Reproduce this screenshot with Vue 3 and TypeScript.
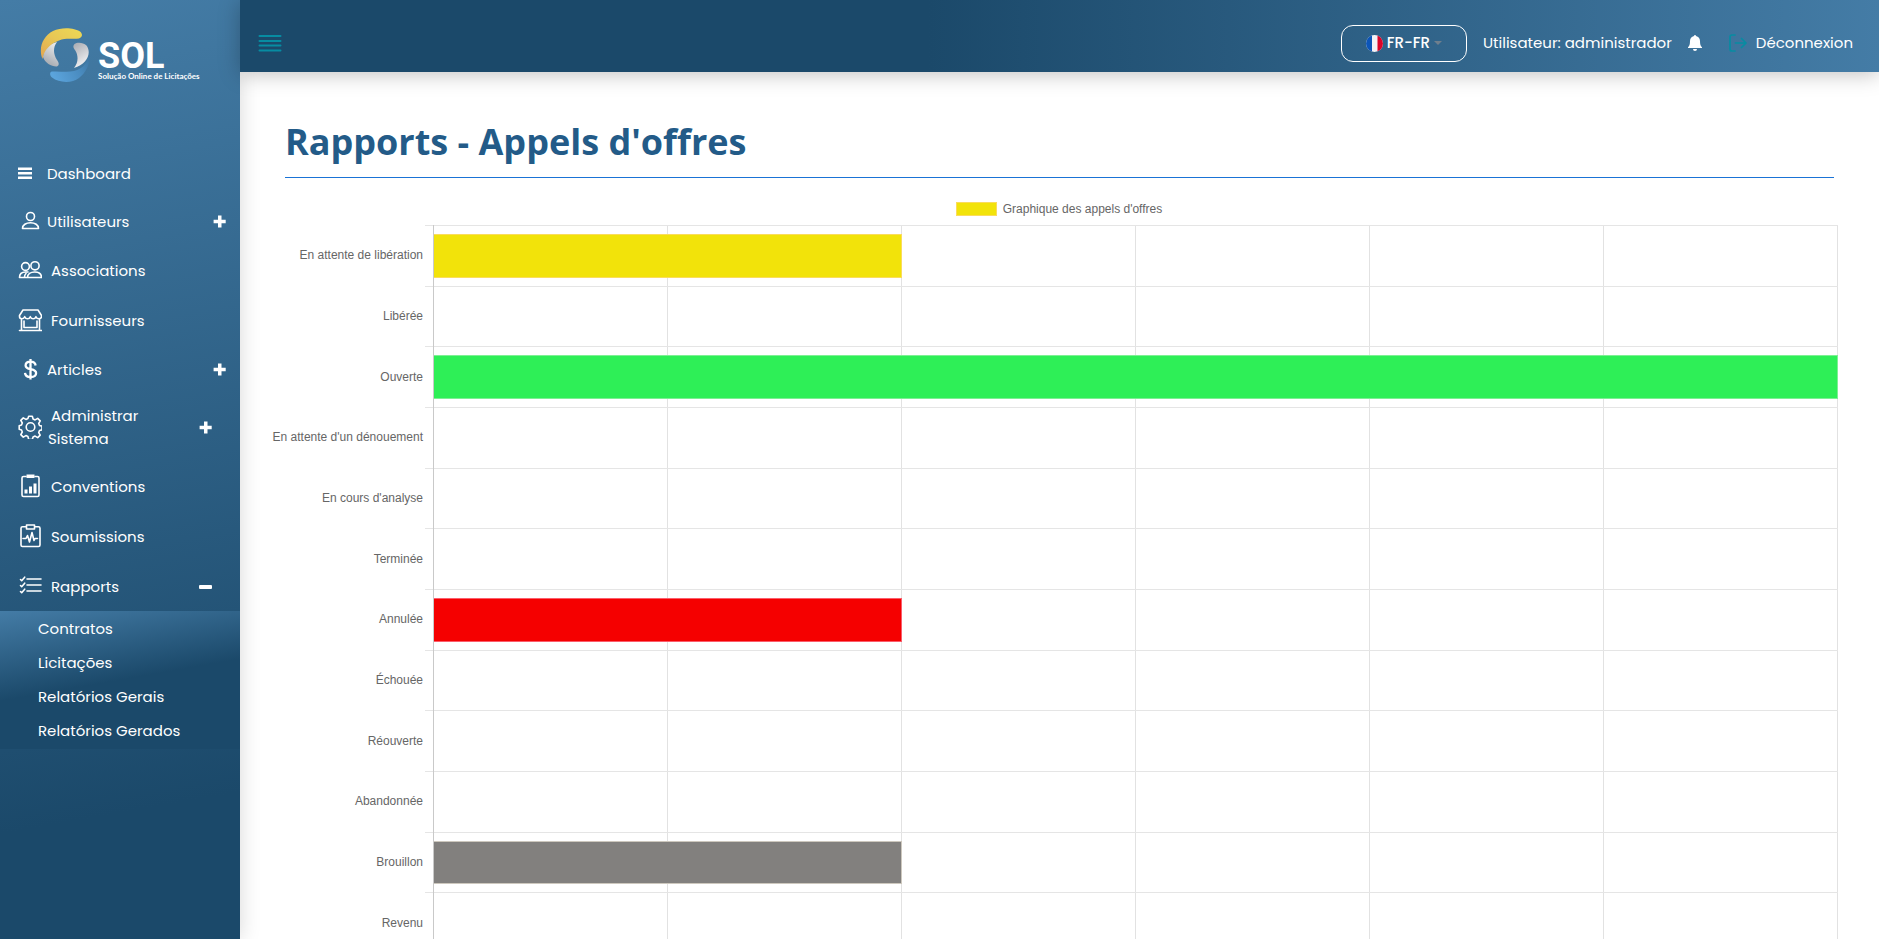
<script setup lang="ts">
interface MenuItem {
  label: string
  icon: string
  size?: 'tight' | 'wide'
  toggle?: 'plus' | 'minus'
  inset?: boolean
}

interface ChartRow {
  label: string
  value: number
  tone: string
}

const menu: MenuItem[] = [
  { label: 'Dashboard', icon: 'bars', size: 'tight' },
  { label: 'Utilisateurs', icon: 'user', size: 'tight', toggle: 'plus' },
  { label: 'Associations', icon: 'users', size: 'wide' },
  { label: 'Fournisseurs', icon: 'shop', size: 'wide' },
  { label: 'Articles', icon: 'dollar', size: 'tight', toggle: 'plus' },
  { label: 'Administrar Sistema', icon: 'gear', toggle: 'plus', inset: true },
  { label: 'Conventions', icon: 'report', size: 'wide' },
  { label: 'Soumissions', icon: 'pulse', size: 'wide' },
  { label: 'Rapports', icon: 'checks', size: 'wide', toggle: 'minus', inset: true },
]

const reports: string[] = ['Contratos', 'Licitações', 'Relatórios Gerais', 'Relatórios Gerados']

const maxValue = 6
const rows: ChartRow[] = [
  { label: 'En attente de libération', value: 2, tone: 'yellow' },
  { label: 'Libérée', value: 0, tone: '' },
  { label: 'Ouverte', value: 6, tone: 'green' },
  { label: "En attente d'un dénouement", value: 0, tone: '' },
  { label: "En cours d'analyse", value: 0, tone: '' },
  { label: 'Terminée', value: 0, tone: '' },
  { label: 'Annulée', value: 2, tone: 'red' },
  { label: 'Échouée', value: 0, tone: '' },
  { label: 'Réouverte', value: 0, tone: '' },
  { label: 'Abandonnée', value: 0, tone: '' },
  { label: 'Brouillon', value: 2, tone: 'gray' },
  { label: 'Revenu', value: 0, tone: '' },
]
</script>

<template>
  <div class="app">
    <aside class="sidebar">
      <a class="brand" href="#">
        <svg class="brand-mark" viewBox="0 0 50 54" aria-hidden="true">
          <defs>
            <linearGradient id="gold" x1="0" y1="1" x2="1" y2="0">
              <stop offset="0" stop-color="#e2a551" />
              <stop offset="0.5" stop-color="#e8c755" />
              <stop offset="1" stop-color="#ecd955" />
            </linearGradient>
            <linearGradient id="silverLeft" x1="1" y1="0" x2="0.6" y2="1">
              <stop offset="0" stop-color="#f4f4f5" />
              <stop offset="1" stop-color="#a9adb3" />
            </linearGradient>
            <linearGradient id="silverRight" x1="0" y1="0" x2="0.4" y2="1">
              <stop offset="0" stop-color="#a6a9b0" />
              <stop offset="1" stop-color="#f1f1f3" />
            </linearGradient>
            <linearGradient id="azure" x1="0" y1="0.6" x2="1" y2="0.2">
              <stop offset="0" stop-color="#5ba4dc" />
              <stop offset="0.6" stop-color="#4a8cc0" />
              <stop offset="1" stop-color="#3d74a0" />
            </linearGradient>
          </defs>
          <path fill="url(#azure)" d="M50 22C49 34 43 41 34 43C27 44.500 20 43 12 43.500C9.500 44 9.500 47.500 12 49.500C19 55 32 55.500 39 50C47 44 51 34 50 22Z" />
          <path fill="url(#silverLeft)" d="M17 14C10 15 3 22 3 29C5 35 12 39 17 38.500C20 37 18.500 34 17 32C13 26 13 19 17 14Z" />
          <path fill="url(#gold)" d="M2.500 31C-2 20 3 8 13 3C22-1.500 35 0 40 3.500C43 6 42.500 9.500 39 10.500C33 11.500 26 9.500 19 12.500C10 16 4 22 2.500 31Z" />
          <path fill="url(#silverRight)" d="M34 40C47 36 52 25 46.500 17.500C43 14 37 14 34.500 16C32.500 18 33.500 20 35 22C39 28 38 35 34 40Z" />
        </svg>
        <span class="brand-words">
          <span class="brand-name">SOL</span>
          <span class="brand-tagline">Solução Online de Licitações</span>
        </span>
      </a>

      <nav class="menu" aria-label="Menu">
        <a
          v-for="item in menu"
          :key="item.label"
          class="menu-item"
          :class="[item.size, { inset: item.inset }]"
          href="#"
        >
          <svg v-if="item.icon === 'bars'" class="icon" viewBox="0 0 24 24" aria-hidden="true">
            <path fill="#fff" d="M0 6.500h14v2.500H0zM0 11h14v2.500H0zM0 15.500h14v2.500H0z" />
          </svg>
          <svg v-else-if="item.icon === 'user'" class="icon line" viewBox="0 0 24 24" aria-hidden="true">
            <circle cx="12.500" cy="7.500" r="4" />
            <path d="M4.500 19.500h16c0-3.600-3.600-5.800-8-5.800s-8 2.200-8 5.800z" />
          </svg>
          <svg v-else-if="item.icon === 'users'" class="icon line" viewBox="0 0 24 24" aria-hidden="true">
            <circle cx="7.500" cy="8.500" r="3.900" />
            <circle cx="17" cy="7.800" r="4.100" />
            <path d="M9.500 19.500h14c0-3.600-2.800-5.500-6.800-5.500s-7.200 2-7.200 5.500zM9.500 19.500H1.500c0-3.600 2.600-5.500 6-5.500h2.500M8 15.500c-1 1-1.500 2-1.500 3.500" />
          </svg>
          <svg v-else-if="item.icon === 'shop'" class="icon line" viewBox="0 0 24 24" aria-hidden="true">
            <path d="M5 2h15l3.500 5.500v1c0 3-4.500 3-5.600.2-1 2.800-4.400 2.800-5.600 0-1 2.800-4.400 2.800-5.600 0C5.500 11.500 1.500 11.500 1.500 8.500v-1zM3.500 11v11M21.500 11v11M1.500 22.500h22M6 13v6.500h13V13" />
          </svg>
          <svg v-else-if="item.icon === 'dollar'" class="icon" viewBox="0 0 24 24" aria-hidden="true">
            <path fill="none" stroke="#fff" stroke-width="2.300" d="M12.500 2v20.500M17.600 8.500c-.3-2.500-2-3.800-5-3.800-3.200 0-5 1.500-5 3.700 0 5.400 10.500 2.200 10.500 7.700 0 2.400-2 4-5.400 4s-5.500-1.500-5.700-4.200" />
          </svg>
          <svg v-else-if="item.icon === 'gear'" class="icon line" viewBox="0 0 24 24" aria-hidden="true">
            <circle cx="12.500" cy="12" r="4.300" />
            <path d="M10.700 1.200h3.600l.8 2.800 2 .9 2.600-1.500 2.500 2.500-1.500 2.600.8 2 2.500.7v3.600l-2.500.7-.8 2 1.500 2.600-2.500 2.500-2.600-1.500-2 .9-.8 2.500h-3.600L9.900 21.500l-2-.9-2.600 1.500-2.500-2.500 1.500-2.600-.8-2-2.300-.7v-3.600l2.300-.7.8-2-1.500-2.600 2.500-2.500 2.600 1.500 2-.9z" />
          </svg>
          <svg v-else-if="item.icon === 'report'" class="icon line" viewBox="0 0 24 24" aria-hidden="true">
            <path d="M8 2.500H5.500q-1.500 0-1.500 1.500v17q0 1.500 1.500 1.500h14q1.500 0 1.500-1.500V4q0-1.500-1.500-1.500H17" />
            <path class="solid" d="M8.500.500h8V4h-8zM6.500 15.500h3v4h-3zM11 12.500h3v7h-3zM15.500 9.500h3v10h-3z" />
          </svg>
          <svg v-else-if="item.icon === 'pulse'" class="icon line" viewBox="0 0 24 24" aria-hidden="true">
            <path d="M8 2.800H4.500Q3 2.800 3 4.300V21q0 1.500 1.500 1.500h16q1.500 0 1.500-1.500V4.300q0-1.500-1.500-1.500H17M8.500 1h8v4h-8zM5 14.500h3l1.500-3 2 6.500 2.500-9.500 2 8 1-2h2.500" />
          </svg>
          <svg v-else class="icon line" viewBox="0 0 24 24" aria-hidden="true">
            <path d="M9 5h14M9 11h14M9 17h14M2.500 5.500l1.200 1.200 3-3.500M2.500 11.500l1.200 1.200 3-3.500M2.500 17.500l1.200 1.200 3-3.500" />
          </svg>
          <span class="menu-label">{{ item.label }}</span>
          <svg v-if="item.toggle" class="toggle" viewBox="0 0 13 13" aria-hidden="true">
            <path v-if="item.toggle === 'plus'" fill="#fff" d="M5 .500h3.500v4.300h4.200v3.500H8.500v4.200H5V8.300H.600V4.800H5z" />
            <rect v-else fill="#fff" x="0" y="5" width="13" height="4" rx="1" />
          </svg>
        </a>
      </nav>

      <nav class="submenu" aria-label="Rapports">
        <a v-for="report in reports" :key="report" href="#">{{ report }}</a>
      </nav>
    </aside>

    <div class="page">
      <header class="topbar">
        <button class="burger" type="button" aria-label="Menu">
          <svg viewBox="0 0 24 18" aria-hidden="true">
            <path stroke="#078ca2" stroke-width="2" stroke-linecap="round" d="M1.500 2h21M1.500 7h21M1.500 11.500h21M1.500 16.500h21" />
          </svg>
        </button>
        <div class="session">
          <button class="language" type="button" aria-haspopup="listbox">
            <svg class="flag" viewBox="0 0 17 17" aria-hidden="true">
              <clipPath id="disc"><circle cx="8.500" cy="8.500" r="8.500" /></clipPath>
              <g clip-path="url(#disc)">
                <rect width="17" height="17" fill="#f3f1f5" />
                <rect width="6" height="17" fill="#0c55b8" />
                <rect x="11.500" width="6" height="17" fill="#da0428" />
              </g>
            </svg>
            <span class="text">FR-FR</span>
            <svg class="caret" viewBox="0 0 8 4" aria-hidden="true"><path fill="#6f7f8d" d="M0 0h8L4 4z" /></svg>
          </button>
          <span class="user text">Utilisateur: administrador</span>
          <button class="bell" type="button" aria-label="Notifications">
            <svg viewBox="0 0 14 16" aria-hidden="true">
              <path fill="#fff" d="M7 0a1 1 0 0 1 1 1c2.500.5 4 2.500 4 5 0 3.500.6 5 2 6.200V13H0v-.8C1.400 11 2 9.500 2 6c0-2.500 1.500-4.500 4-5a1 1 0 0 1 1-1zM5 14h4a2 2 0 0 1-4 0z" />
            </svg>
          </button>
          <a class="logout" href="#">
            <svg viewBox="0 0 18 18" aria-hidden="true">
              <path fill="none" stroke="#078ca2" stroke-width="1.700" stroke-linecap="round" stroke-linejoin="round" d="M6 1H3Q1 1 1 3v12q0 2 2 2h3M6.500 9H17M12.500 4.500L17 9l-4.500 4.500" />
            </svg>
            <span class="text">Déconnexion</span>
          </a>
        </div>
      </header>

      <main class="content">
        <h1>Rapports - Appels d'offres</h1>
        <section class="chart" aria-label="Graphique des appels d'offres">
          <div class="legend"><span class="swatch"></span>Graphique des appels d'offres</div>
          <div class="chart-body">
            <div class="labels">
              <span v-for="row in rows" :key="row.label">{{ row.label }}</span>
            </div>
            <div class="ticks"><i v-for="row in rows" :key="row.label"></i></div>
            <div class="plot">
              <div class="columns"><i v-for="n in maxValue" :key="n"></i></div>
              <div class="bars">
                <div v-for="row in rows" :key="row.label" class="bar-row">
                  <div
                    v-if="row.value"
                    class="bar"
                    :class="row.tone"
                    :style="{ width: (row.value / maxValue) * 100 + '%' }"
                  ></div>
                </div>
              </div>
            </div>
          </div>
        </section>
      </main>
    </div>
  </div>
</template>

<style>
body {
  margin: 0;
}
</style>

<style scoped>
.app {
  display: flex;
  height: 100vh;
  overflow: hidden;
  background: #fff;
  color: #fff;
  font-family: Poppins, Inter, "Noto Sans", sans-serif;
  font-size: 15px;
}
.app * {
  box-sizing: border-box;
}
a {
  color: inherit;
  text-decoration: none;
}
button {
  padding: 0;
  border: 0;
  background: none;
  color: inherit;
  font: inherit;
  cursor: pointer;
}
svg {
  display: block;
  flex: none;
}

.sidebar {
  flex: none;
  width: 240px;
  background: linear-gradient(170deg, #447ca6 0%, #1b496a 85%);
  box-shadow: 0 0 20px rgba(0, 0, 0, 0.16);
}
.brand {
  display: flex;
  gap: 8px;
  height: 149px;
  padding: 28px 0 0 40px;
}
.brand-mark {
  width: 50px;
  height: 54px;
}
.brand-words {
  display: flex;
  flex-direction: column;
  padding-top: 13px;
  white-space: nowrap;
}
.brand-name {
  font: 700 36px/30px Roboto, sans-serif;
}
.brand-tagline {
  font: 700 8px/10px Lato, sans-serif;
}
.menu-item {
  display: flex;
  align-items: center;
  min-height: 49px;
  padding: 11px 14px 11px 18px;
  line-height: 23px;
}
.menu-item.tight {
  min-height: 48px;
}
.menu-item.wide {
  min-height: 50px;
}
.menu-item.inset {
  padding-right: 28px;
}
.icon {
  width: 24px;
  height: 24px;
  margin-right: 6px;
}
.tight .icon {
  margin-right: 5px;
}
.line {
  fill: none;
  stroke: #fff;
  stroke-width: 1.6px;
  stroke-linejoin: round;
  stroke-linecap: round;
}
.solid {
  fill: #fff;
  stroke: none;
}
.menu-label {
  max-width: 110px;
  text-indent: 3px;
}
.tight .menu-label {
  text-indent: 0;
}
.toggle {
  width: 13px;
  height: 13px;
  margin-left: auto;
}
.submenu {
  padding: 1px 0;
  background: linear-gradient(170deg, #447ca6 0%, #1b496a 50%);
}
.submenu a {
  display: block;
  padding: 5px 0 6px 38px;
  line-height: 23px;
}

.page {
  flex: 1;
  min-width: 0;
}
.topbar {
  position: relative;
  display: flex;
  align-items: center;
  justify-content: space-between;
  height: 72px;
  padding: 14px 26px 0 18px;
  background: linear-gradient(90deg, #1b496a 42%, #447ca6 100%);
  box-shadow: 0 2px 20px rgba(0, 0, 0, 0.25);
}
.burger svg {
  width: 24px;
  height: 18px;
}
.session {
  display: flex;
  align-items: center;
}
.text {
  padding-bottom: 2px;
}
.language {
  display: flex;
  align-items: center;
  justify-content: center;
  gap: 4px;
  width: 126px;
  height: 37px;
  margin-right: 16px;
  border: 1px solid #fff;
  border-radius: 12px;
  font-weight: 500;
}
.flag {
  width: 17px;
  height: 17px;
}
.caret {
  width: 8px;
  height: 4px;
}
.bell {
  margin: 0 27px 0 16px;
}
.bell svg {
  width: 14px;
  height: 16px;
}
.logout {
  display: flex;
  align-items: center;
  gap: 9px;
}
.logout svg {
  width: 18px;
  height: 18px;
}

.content {
  padding: 44px 41px 0 32px;
}
h1 {
  margin: 0 4px 0 13px;
  padding-bottom: 9px;
  border-bottom: 1px solid #1a73d6;
  color: #235b88;
  font: 700 36px/52px "Segoe UI", "Open Sans", sans-serif;
}
.chart {
  color: #666;
  font: 12px/14px "Liberation Sans", Arial, sans-serif;
}
.legend {
  display: flex;
  align-items: center;
  justify-content: center;
  gap: 6px;
  height: 47px;
  padding: 14px 0 0 8px;
}
.swatch {
  width: 41px;
  height: 14px;
  border: 1px solid #fbdc5c;
  background: #f2e30a;
}
.chart-body {
  display: grid;
  grid-template-columns: 151px 10px 1fr;
  height: 728px;
}
.labels,
.ticks,
.bars {
  display: grid;
  grid-template-rows: repeat(12, 1fr);
}
.labels {
  align-items: center;
  justify-items: end;
  white-space: nowrap;
}
.ticks {
  padding-left: 2px;
}
.ticks i,
.bar-row {
  border-top: 1px solid #e5e5e5;
}
.plot {
  display: grid;
  grid-template: 1fr / 1fr;
  border-left: 1px solid #c9c9c9;
}
.columns,
.bars {
  grid-area: 1 / 1;
}
.columns {
  display: grid;
  grid-template-columns: repeat(6, 1fr);
}
.columns i {
  border-right: 1px solid #e2e2e2;
}
.bar-row {
  padding: 8px 0;
}
.bar {
  height: 100%;
  border: 1px solid;
  border-left: 0;
}
.yellow {
  border-color: #fbdc5c;
  background: #f2e30a;
}
.green {
  border-color: #7df093;
  background: #2eef57;
}
.red {
  border-color: #fb5d6c;
  background: #f50000;
}
.gray {
  border-color: #cdc8be;
  background: #82807e;
}
</style>
